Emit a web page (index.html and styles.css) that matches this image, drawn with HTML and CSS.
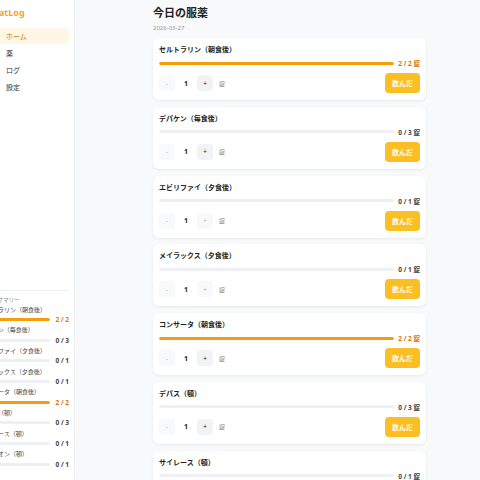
FILE: index.html
```html
<!DOCTYPE html>
<html lang="ja">
<head>
    <meta charset="UTF-8">
    <meta name="viewport" content="width=device-width, initial-scale=1.0">
    <title>TreatLog</title>
    <link rel="stylesheet" href="styles.css">
</head>
<body>
    <aside class="sidebar">
        <div class="logo">TreatLog</div>
        <nav class="nav">
            <a class="nav-item active"><span class="nav-icon"></span>ホーム</a>
            <a class="nav-item"><span class="nav-icon"></span>薬</a>
            <a class="nav-item"><span class="nav-icon"></span>ログ</a>
            <a class="nav-item"><span class="nav-icon"></span>設定</a>
        </nav>

        <div class="summary">
            <div class="summary-title">今日のサマリー</div>
            <div class="summary-item">
                <div class="summary-name">セルトラリン（朝食後）</div>
                <div class="summary-row"><div class="track"><div class="fill" style="width:100%"></div></div><span class="summary-val done">2 / 2</span></div>
            </div>
            <div class="summary-item">
                <div class="summary-name">デパケン（毎食後）</div>
                <div class="summary-row"><div class="track"><div class="fill" style="width:0%"></div></div><span class="summary-val">0 / 3</span></div>
            </div>
            <div class="summary-item">
                <div class="summary-name">エビリファイ（夕食後）</div>
                <div class="summary-row"><div class="track"><div class="fill" style="width:0%"></div></div><span class="summary-val">0 / 1</span></div>
            </div>
            <div class="summary-item">
                <div class="summary-name">メイラックス（夕食後）</div>
                <div class="summary-row"><div class="track"><div class="fill" style="width:0%"></div></div><span class="summary-val">0 / 1</span></div>
            </div>
            <div class="summary-item">
                <div class="summary-name">コンサータ（朝食後）</div>
                <div class="summary-row"><div class="track"><div class="fill" style="width:100%"></div></div><span class="summary-val done">2 / 2</span></div>
            </div>
            <div class="summary-item">
                <div class="summary-name">デパス（頓）</div>
                <div class="summary-row"><div class="track"><div class="fill" style="width:0%"></div></div><span class="summary-val">0 / 3</span></div>
            </div>
            <div class="summary-item">
                <div class="summary-name">サイレース（頓）</div>
                <div class="summary-row"><div class="track"><div class="fill" style="width:0%"></div></div><span class="summary-val">0 / 1</span></div>
            </div>
            <div class="summary-item">
                <div class="summary-name">ハルシオン（頓）</div>
                <div class="summary-row"><div class="track"><div class="fill" style="width:0%"></div></div><span class="summary-val">0 / 1</span></div>
            </div>
        </div>
    </aside>

    <main class="main">
        <h1>今日の服薬</h1>
        <div class="date">2026-03-27</div>

        <div class="card">
            <div class="med-name">セルトラリン（朝食後）</div>
            <div class="progress"><div class="track"><div class="fill" style="width:100%"></div></div><span class="count done">2 / 2 錠</span></div>
            <div class="controls">
                <button class="step" disabled>-</button><span class="qty">1</span><button class="step">+</button><span class="unit">錠</span>
                <button class="take">飲んだ</button>
            </div>
        </div>

        <div class="card">
            <div class="med-name">デパケン（毎食後）</div>
            <div class="progress"><div class="track"><div class="fill" style="width:0%"></div></div><span class="count">0 / 3 錠</span></div>
            <div class="controls">
                <button class="step" disabled>-</button><span class="qty">1</span><button class="step">+</button><span class="unit">錠</span>
                <button class="take">飲んだ</button>
            </div>
        </div>

        <div class="card">
            <div class="med-name">エビリファイ（夕食後）</div>
            <div class="progress"><div class="track"><div class="fill" style="width:0%"></div></div><span class="count">0 / 1 錠</span></div>
            <div class="controls">
                <button class="step" disabled>-</button><span class="qty">1</span><button class="step" disabled>+</button><span class="unit">錠</span>
                <button class="take">飲んだ</button>
            </div>
        </div>

        <div class="card">
            <div class="med-name">メイラックス（夕食後）</div>
            <div class="progress"><div class="track"><div class="fill" style="width:0%"></div></div><span class="count">0 / 1 錠</span></div>
            <div class="controls">
                <button class="step" disabled>-</button><span class="qty">1</span><button class="step" disabled>+</button><span class="unit">錠</span>
                <button class="take">飲んだ</button>
            </div>
        </div>

        <div class="card">
            <div class="med-name">コンサータ（朝食後）</div>
            <div class="progress"><div class="track"><div class="fill" style="width:100%"></div></div><span class="count done">2 / 2 錠</span></div>
            <div class="controls">
                <button class="step" disabled>-</button><span class="qty">1</span><button class="step">+</button><span class="unit">錠</span>
                <button class="take">飲んだ</button>
            </div>
        </div>

        <div class="card">
            <div class="med-name">デパス（頓）</div>
            <div class="progress"><div class="track"><div class="fill" style="width:0%"></div></div><span class="count">0 / 3 錠</span></div>
            <div class="controls">
                <button class="step" disabled>-</button><span class="qty">1</span><button class="step">+</button><span class="unit">錠</span>
                <button class="take">飲んだ</button>
            </div>
        </div>

        <div class="card">
            <div class="med-name">サイレース（頓）</div>
            <div class="progress"><div class="track"><div class="fill" style="width:0%"></div></div><span class="count">0 / 1 錠</span></div>
            <div class="controls">
                <button class="step" disabled>-</button><span class="qty">1</span><button class="step" disabled>+</button><span class="unit">錠</span>
                <button class="take">飲んだ</button>
            </div>
        </div>
    </main>
</body>
</html>
```

FILE: styles.css
```css
* {
    box-sizing: border-box;
}
body {
    margin: 0;
    height: 480px;
    overflow: hidden;
    display: flex;
    font-family: "Noto Sans", "Noto Sans CJK JP", sans-serif;
    background-color: #f8f9fb;
    color: #222;
}
.sidebar {
    flex: 0 0 94px;
    margin-left: -19px;
    height: 480px;
    background: white;
    border-right: 1px solid #eceef1;
    display: flex;
    flex-direction: column;
    padding: 6px 5px 10px 0;
}
.logo {
    font-size: 9px;
    font-weight: bold;
    color: #f5a524;
    line-height: 14px;
    margin-bottom: 8px;
    padding-left: 4px;
}
.nav {
    display: flex;
    flex-direction: column;
    gap: 1px;
}
.nav-item {
    display: flex;
    align-items: center;
    gap: 9px;
    height: 16px;
    padding-left: 6px;
    border-radius: 4px;
    font-size: 7px;
    color: #333;
}
.nav-item.active {
    background-color: #fff7e6;
    color: #d97706;
}
.nav-icon {
    width: 10px;
    height: 6px;
    border-radius: 2px;
    background: #9aa0a8;
}
.summary {
    margin-top: auto;
    border-top: 1px solid #eceef1;
    padding-top: 5px;
}
.summary-title {
    font-size: 5.5px;
    color: #888;
    line-height: 8px;
    margin-bottom: 1px;
}
.summary-item {
    height: 20.7px;
}
.summary-name {
    font-size: 6px;
    color: #444;
    line-height: 10px;
    white-space: nowrap;
    margin-left: -1px;
}
.summary-row {
    display: flex;
    align-items: center;
    gap: 5px;
    height: 10px;
}
.summary-val {
    font-size: 6.5px;
    font-weight: bold;
    color: #444;
    white-space: nowrap;
}
.track {
    flex: 1;
    height: 3px;
    border-radius: 2px;
    background: #eef0f3;
    overflow: hidden;
}
.fill {
    height: 100%;
    background: #f59e0b;
    border-radius: 2px;
}
.done {
    color: #d97706;
}
.main {
    flex: 1;
    padding: 5px 54px 0 78px;
}
h1 {
    font-size: 11px;
    line-height: 16px;
    margin: 0;
}
.date {
    font-size: 6px;
    color: #999;
    line-height: 10px;
    margin: 2px 0 5px;
}
.card {
    background: white;
    border-radius: 6px;
    box-shadow: 0 1px 3px rgba(0,0,0,0.07);
    padding: 7px 6px;
    margin-bottom: 6.8px;
    height: 62px;
}
.med-name {
    font-size: 7px;
    font-weight: bold;
    line-height: 9px;
    margin-bottom: 4px;
}
.progress {
    display: flex;
    align-items: center;
    gap: 4px;
    height: 10px;
    margin-bottom: 5px;
}
.count {
    font-size: 6.5px;
    font-weight: bold;
    color: #444;
    white-space: nowrap;
}
.count.done {
    color: #d97706;
}
.controls {
    display: flex;
    align-items: center;
    height: 20px;
}
.step {
    width: 16px;
    height: 16px;
    border: none;
    border-radius: 4px;
    background: #f1f3f5;
    color: #333;
    font-size: 7px;
    padding: 0;
    font-family: inherit;
}
.step:disabled {
    background: #f8f9fa;
    color: #bbb;
}
.qty {
    width: 22px;
    text-align: center;
    font-size: 7px;
    font-weight: bold;
}
.unit {
    font-size: 6px;
    color: #888;
    margin-left: 6px;
}
.take {
    margin-left: auto;
    width: 35px;
    height: 20px;
    border: none;
    border-radius: 4px;
    background: #fbbf24;
    color: white;
    font-size: 7px;
    font-weight: bold;
    padding: 0;
    font-family: inherit;
}
```
